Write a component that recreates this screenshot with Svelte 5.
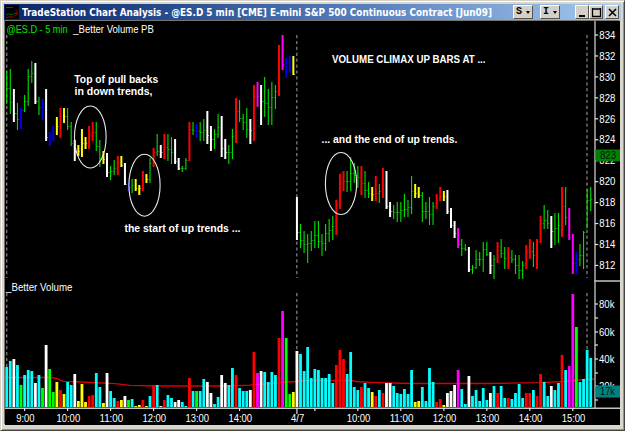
<script>
  const colors = { G: '#00e400', W: '#ffffff', B: '#0000e6', Y: '#ffff00', R: '#ff0000', M: '#ff00ff', C: '#00ffff', L: '#00ff00' };

  // Five-minute bars: colour, high and low on the canvas
  const prices = `G71-104 G69-114 W89-122 G103-130 B108-129 G95-112 G69-106 G61-83 W63-104 G97-115 B99-120 W89-141
    B132-146 B126-141 Y117-135 R108-138 Y108-123 G108-130 G122-146 W140-161 Y145-156 Y129-157 Y137-149 R126-149
    R122-141 G122-151 G140-167 Y151-164 W153-177 G166-180 G160-175 R156-175 Y156-167 W163-185 B182-191 G179-193
    Y179-191 Y185-195 R171-191 Y174-183 G158-183 R148-167 G134-156 W145-158 R134-159 G134-161 G137-164 W139-164
    W158-170 G166-172 G158-170 R122-161 G122-135 B124-138 G122-141 G119-141 W111-144 W126-151 G129-149 G114-138
    W116-157 W139-159 G145-164 G129-159 R98-143 G100-122 G114-130 G108-138 W119-144 R85-141 M82-107 W85-125
    G77-117 G89-125 G82-125 G85-109 R45-96 M35-70 B58-78 B56-73 Y56-75
    W197-240 G224-248 G231-253 G234-263 G231-251 G221-248 G221-248 G234-256 G224-251 G219-242 G216-240 R200-235
    R174-209 R171-191 G171-192 G157-191 G163-183 G166-188 R166-195 G171-198 G182-198 Y187-201 R176-201 G184-203
    R168-198 W171-209 W202-217 G205-219 G202-222 G202-222 G194-217 G200-217 G176-214 Y184-198 Y187-198 G192-222
    G202-219 G197-225 G202-225 R194-209 R187-201 Y191-201 W190-214 W208-228 W221-238 M228-248 G239-256 G244-251
    W247-272 G265-274 G250-269 G252-266 G242-272 G242-256 W252-274 G255-279 R242-263 G239-258 G247-269 R247-269
    G250-263 G255-274 G255-279 G261-279 R245-269 R239-259 G242-267 R239-269 R216-243 G205-229 G210-229 W216-248
    G213-245 G213-243 R187-237 G187-225 M208-240 M234-274 B252-274 G244-266 G231-269 G189-228 G187-211`
    .split(/\s+/).map((s) => {
      const [hi, lo] = s.slice(1).split('-').map(Number);
      return { c: s[0], hi, lo };
    });

  const volumes = `C367 C361 W359 C365 L385 C375 C370 C371 W383 C375 L388 W345 L369 L392 Y382 R390 Y394 C382 C385 W374
    Y401 Y384 Y402 R396 R395 C373 C387 Y403 W373 C391 C398 R401 Y400 W396 L400 C399 Y406 Y405 R400 Y406 C396 R385
    C385 W406 R400 C395 C398 W402 W400 C402 C406 R378 C391 L391 C391 C379 W382 W393 C404 C397 W375 W383 C385 C368
    R375 C388 C391 C391 W390 R352 M373 W371 C372 C382 C372 C375 R338 M311 L338 L394 Y392
    W351 C354 C371 C347 C378 C369 C370 C378 C378 C374 C383 R365 R350 R359 C374 C352 C387 C390 R387 C383 C388 Y392
    R396 C390 R393 W383 W383 C386 C393 C394 C389 C394 C370 Y402 Y401 C387 C401 C368 C382 R402 R399 Y405 W393 W391
    W385 M370 C389 C404 W376 C396 C390 C401 C388 C400 W393 C386 R393 C386 C398 R398 C399 C393 C384 C398 R393 R393
    C390 R396 R374 C382 C396 W386 C390 C383 R355 C370 M366 M294 L327 C382 C379 C350 C358`
    .split(/\s+/).map((s) => ({ c: s[0], y: +s.slice(1) }));

  const x = (i) => 6.7 + i * 3.583;

  // A bar closes inside the range it shares with the following one
  const closes = prices.map((p, i) => {
    const n = prices[i + 1] ?? p;
    const mid = (Math.max(p.hi, n.hi) + Math.min(p.lo, n.lo)) / 2;
    return Math.round(Math.min(p.lo - 1, Math.max(p.hi + 1, mid)));
  });

  const hours = [
    ['9:00', 5], ['10:00', 17], ['11:00', 29], ['12:00', 41], ['13:00', 53], ['14:00', 65], ['4/7', 81],
    ['', 86], ['10:00', 98], ['11:00', 110], ['12:00', 122], ['13:00', 134], ['14:00', 146], ['15:00', 158]
  ];
  const levels = Array.from({ length: 12 }, (_, k) => ({ v: 834 - 2 * k, y: 35 + 20.95 * k }));
  const volLevels = [['80k', 304], ['', 318], ['60k', 332], ['', 345], ['40k', 359], ['', 373], ['20k', 386], ['', 400]];
  const fit = 'spacingAndGlyphs';
</script>

<div class="window">
  <header>
    <svg class="app" width="14" height="14" viewBox="0 0 14 14">
      <rect width="14" height="14" fill="#000" />
      <path d="M1 2.5h7M1 10l3-1 3 1 3-2 2 1" fill="none" stroke="#075b16" />
      <path d="M1 12.5h2l2-1 3 1 2-2 2-1V5" fill="none" stroke="#a00000" />
    </svg>
    <svg class="title" width="476" height="16">
      <text x="0" y="12.3" textLength="470" lengthAdjust={fit}>TradeStation Chart Analysis - @ES.D 5 min [CME] E-mini S&amp;P 500 Continuous Contract [Jun09]</text>
    </svg>
    <div class="buttons">
      <button class="menu">S<i></i></button>
      <button class="menu second">I<i></i></button>
      <button class="ctl first"><svg width="11" height="11"><path d="M2 9h6" stroke="#000" stroke-width="2" /></svg></button>
      <button class="ctl"><svg width="11" height="11"><path d="M1.5 1v8.5h8V1M1 2h9" fill="none" stroke="#000" stroke-width="1.3" /></svg></button>
      <button class="ctl close"><svg width="11" height="11"><path d="M2 2l7 7M9 2l-7 7" stroke="#000" stroke-width="1.6" /></svg></button>
    </div>
  </header>

  <svg class="chart" width="615" height="404" viewBox="5 21 615 404">
    <rect x="5" y="21" width="615" height="404" fill="#000" />

    <g stroke="#747474" stroke-width="1.4" stroke-dasharray="3.2 2.7">
      {#each [6.7, 296.8, 587] as dx}
        <path d="M{dx} 35V278M{dx} 293V407" />
      {/each}
    </g>

    <path d="M5 377.5H50L57 378.5 63 381.3 82 382 115 383.6 130 385.3 155 386H230L250 385.2 270 383.5 280 382.6 296 381.5 305 380.5H352L356 381.5 372 382.3 410 383.5H490L540 382.6 565 381.5 578 380 594 379" fill="none" stroke="#d80000" stroke-width="1.3" />
    {#each volumes as v, i}
      <rect x={x(i) - 1.4} y={v.y} width="2.8" height={407 - v.y} fill={colors[v.c]} />
    {/each}

    {#each prices as p, i}
      <path d="M{x(i)} {p.hi}V{p.lo}" stroke={colors[p.c]} stroke-width={p.c === 'G' ? 1.1 : 2} />
      <path d="M{x(i)} {closes[i] + 0.5}h1.7" stroke={colors[p.c]} stroke-width="0.8" opacity="0.7" />
      {#if p.c === 'G' && i > 0}
        <path d="M{x(i)} {Math.min(p.lo, Math.max(p.hi, closes[i - 1])) + 0.5}h-1.6" stroke={colors[p.c]} stroke-width="0.8" opacity="0.55" />
      {/if}
    {/each}

    <g fill="none" stroke="#e8e8e8" stroke-width="1.1">
      <ellipse cx="90.3" cy="137" rx="15.8" ry="31" />
      <ellipse cx="144.5" cy="185.2" rx="15.6" ry="31" />
      <ellipse cx="341" cy="183.5" rx="15.6" ry="31" />
    </g>

    <path d="M595 21V408" stroke="#929292" stroke-width="1.8" />
    <path d="M594 281H620" stroke="#b8b8b8" stroke-width="1.6" />
    <path d="M5 408.3H620" stroke="#c4c4c4" stroke-width="1.4" />

    <g class="axis">
      {#each levels as l}
        <path d="M595 {l.y}h3.2" />
        <text x="599.3" y={l.y + 3.7} textLength="16" lengthAdjust={fit}>{l.v}</text>
      {/each}
      {#each volLevels as [label, y]}
        <path d="M595 {y}h3" />
        {#if label}<text x="599" y={y + 3.7} textLength="15.5" lengthAdjust={fit}>{label}</text>{/if}
      {/each}
      {#each hours as [label, i]}
        <path d="M{x(i)} 408v{label === '4/7' ? 6 : 3}" />
        {#if label}
          <text x={x(i) + 0.7} y="422" text-anchor="middle" lengthAdjust={fit} textLength={label.length === 5 ? 23.7 : label.length === 4 ? 18.3 : 13.2}>{label}</text>
        {/if}
      {/each}
      <rect x="595.5" y="149.5" width="24.5" height="11.8" fill="#008000" />
      <text class="dark" x="600" y="159" textLength="16" lengthAdjust={fit}>823</text>
      <rect x="595.5" y="385.5" width="24.5" height="12" fill="#008080" />
      <text class="dark" x="600" y="395.3" textLength="15" lengthAdjust={fit}>17k</text>
    </g>

    <g class="label">
      <text x="6.5" y="33" textLength="61" lengthAdjust={fit} fill="#00e800">@ES.D - 5 min</text>
      <text x="73.3" y="33" textLength="80.5" lengthAdjust={fit}>_Better Volume PB</text>
      <text x="6" y="291" textLength="66.5" lengthAdjust={fit}>_Better Volume</text>
    </g>

    <g class="note">
      <text x="74.3" y="82.8" textLength="84" lengthAdjust={fit}>Top of pull backs</text>
      <text x="74.5" y="95.2" textLength="78" lengthAdjust={fit}>in down trends,</text>
      <text x="124.5" y="232" textLength="116" lengthAdjust={fit}>the start of up trends ...</text>
      <text x="332" y="63" textLength="153.5" lengthAdjust={fit}>VOLUME CLIMAX UP BARS AT ...</text>
      <text x="321.5" y="143" textLength="136" lengthAdjust={fit}>... and the end of up trends.</text>
    </g>
  </svg>
</div>

<style>
  :global(body) { background: #d4d0c8; }
  .window {
    box-sizing: border-box;
    width: 625px;
    height: 431px;
    padding: 2px 3px 4px 3px;
    background: #d9d6ce;
    border: 1px solid #d4d0c8;
    border-right-color: #46443f;
    border-bottom-color: #46443f;
    box-shadow: inset 1px 1px #fff, inset -1px -1px #96938b;
    display: flex;
    flex-direction: column;
    font-family: "Liberation Sans", Arial, sans-serif;
  }
  header {
    display: flex;
    align-items: center;
    box-sizing: border-box;
    height: 17px;
    width: 617px;
    margin-top: 1px;
    padding: 0 2px 0 1px;
    background: linear-gradient(90deg, #0a246a, #254a8c 25%, #5d85c2 62%, #a6caf0);
    border-bottom: 1px solid #b9b7b0;
  }
  .title { margin-left: 3px; flex: none; }
  .title text {
    font: bold 10.5px "DejaVu Sans Condensed", "DejaVu Sans", sans-serif;
    fill: #fff;
  }
  .app { flex: none; }
  .buttons { display: flex; margin-left: auto; flex: none; }
  button {
    display: flex;
    align-items: center;
    justify-content: center;
    box-sizing: border-box;
    height: 14px;
    width: 14px;
    padding: 0;
    background: #d4d0c8;
    border: 1px solid;
    border-color: #fff #55534e #55534e #fff;
    border-radius: 0;
  }
  .menu {
    width: 20px;
    gap: 4px;
    font: bold 10px/12px "Liberation Mono", monospace;
    color: #000;
  }
  .menu i {
    border: 2.5px solid transparent;
    border-top: 3px solid #000;
    border-bottom: 0;
  }
  .second { margin-left: 7px; }
  .first { margin-left: 15px; }
  .close { margin-left: 2px; }
  .chart {
    display: block;
    flex: none;
    margin-left: 1px;
    box-shadow: -1px -1px #77756f;
  }
  .axis path { stroke: #e4e4e4; stroke-width: 1.2; }
  .axis text { font-size: 10px; fill: #fff; }
  .axis .dark { fill: #001a10; }
  .label text { font-size: 10.5px; }
  .label { fill: #fff; }
  .note { fill: #fff; font-weight: bold; font-size: 10.5px; }
</style>
